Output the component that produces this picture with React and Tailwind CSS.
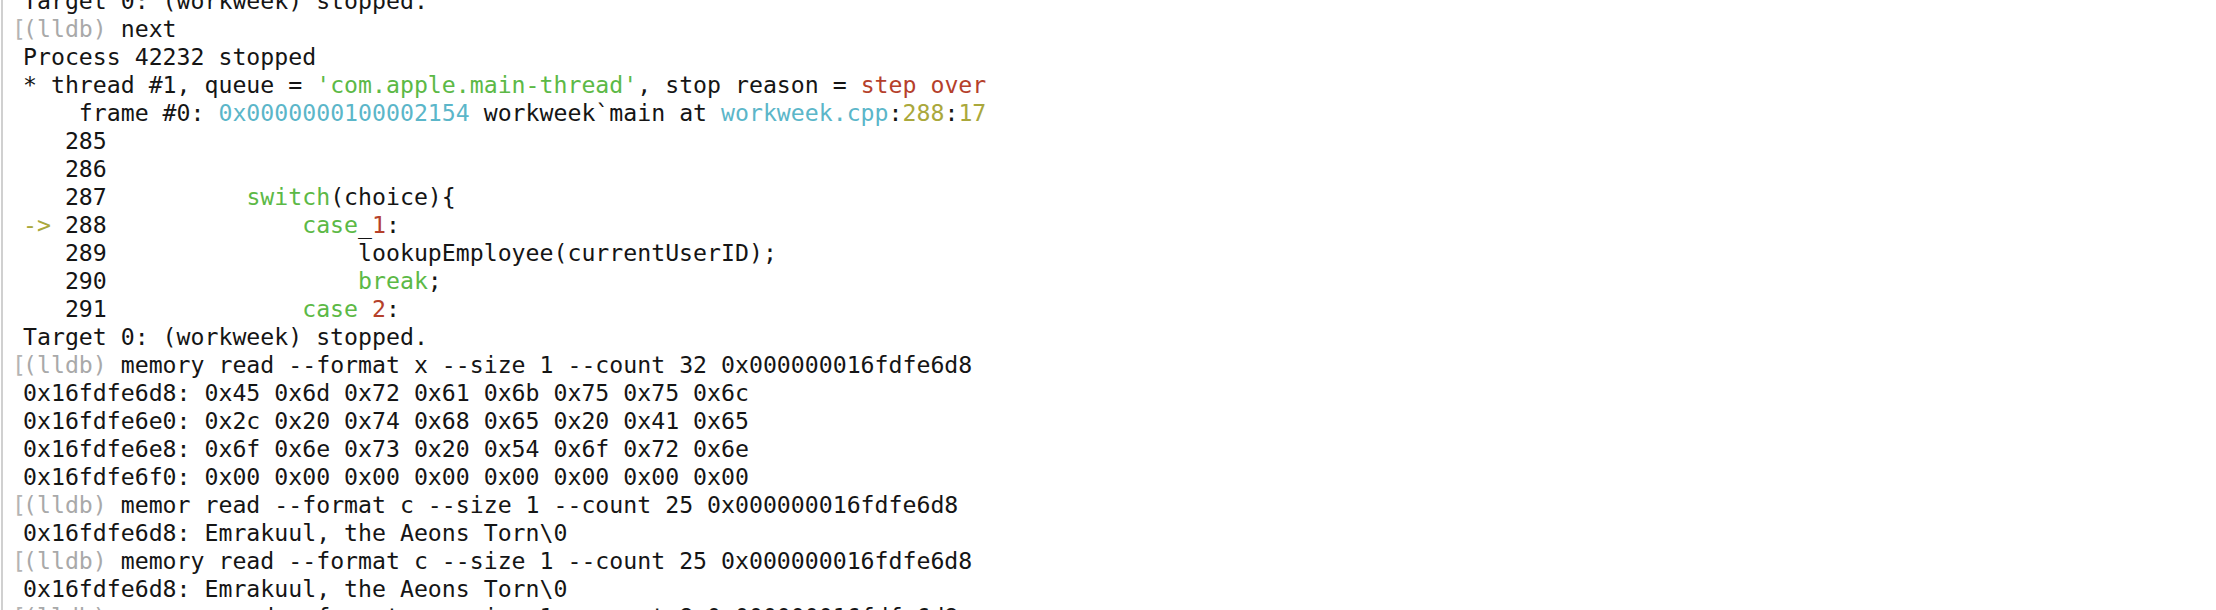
const G = "text-[#5cb946]";
const C = "text-[#5bb6c9]";
const R = "text-[#b5402b]";
const Y = "text-[#aaa83c]";
const P = "text-[#a9a9a9]";

// each line: [marker, segments]; segment = text or [className, text]
const LINES = [
  [false, ["Target 0: (workweek) stopped."]],
  [true, [[P, "(lldb)"], " next"]],
  [false, ["Process 42232 stopped"]],
  [
    false,
    [
      "* thread #1, queue = ",
      [G, "'com.apple.main-thread'"],
      ", stop reason = ",
      [R, "step over"],
    ],
  ],
  [
    false,
    [
      "    frame #0: ",
      [C, "0x0000000100002154"],
      " workweek`main at ",
      [C, "workweek.cpp"],
      ":",
      [Y, "288"],
      ":",
      [Y, "17"],
    ],
  ],
  [false, ["   285"]],
  [false, ["   286"]],
  [false, ["   287          ", [G, "switch"], "(choice){"]],
  [false, [[Y, "->"], " 288              ", [G, "case"], "_", [R, "1"], ":"]],
  [false, ["   289                  lookupEmployee(currentUserID);"]],
  [false, ["   290                  ", [G, "break"], ";"]],
  [false, ["   291              ", [G, "case"], " ", [R, "2"], ":"]],
  [false, ["Target 0: (workweek) stopped."]],
  [
    true,
    [
      [P, "(lldb)"],
      " memory read --format x --size 1 --count 32 0x000000016fdfe6d8",
    ],
  ],
  [false, ["0x16fdfe6d8: 0x45 0x6d 0x72 0x61 0x6b 0x75 0x75 0x6c"]],
  [false, ["0x16fdfe6e0: 0x2c 0x20 0x74 0x68 0x65 0x20 0x41 0x65"]],
  [false, ["0x16fdfe6e8: 0x6f 0x6e 0x73 0x20 0x54 0x6f 0x72 0x6e"]],
  [false, ["0x16fdfe6f0: 0x00 0x00 0x00 0x00 0x00 0x00 0x00 0x00"]],
  [
    true,
    [
      [P, "(lldb)"],
      " memor read --format c --size 1 --count 25 0x000000016fdfe6d8",
    ],
  ],
  [false, ["0x16fdfe6d8: Emrakuul, the Aeons Torn\\0"]],
  [
    true,
    [
      [P, "(lldb)"],
      " memory read --format c --size 1 --count 25 0x000000016fdfe6d8",
    ],
  ],
  [false, ["0x16fdfe6d8: Emrakuul, the Aeons Torn\\0"]],
  [
    true,
    [
      [P, "(lldb)"],
      " memory read --format c --size 1 --count 8 0x000000016fdfe6d8",
    ],
  ],
];

function Line({ mark, segs }) {
  return (
    <div className="flex h-[28px] leading-[28px]">
      <span className="w-[20px] shrink-0 pl-[9px] text-[#b4b4b4]">
        {mark ? "[" : ""}
      </span>
      <span className="whitespace-pre">
        {segs.map((s, i) =>
          typeof s === "string" ? (
            <span key={i}>{s}</span>
          ) : (
            <span key={i} className={s[0]}>
              {s[1]}
            </span>
          )
        )}
      </span>
    </div>
  );
}

export default function App() {
  return (
    <div className="flex h-[610px] w-full overflow-hidden bg-white">
      <div className="ml-px w-[2px] shrink-0 bg-[#d0d0d0]" />
      <div
        className="mt-[-13px] flex-1 text-[23.2px] text-[#151515]"
        style={{ fontFamily: '"DejaVu Sans Mono", "Liberation Mono", monospace' }}
      >
        {LINES.map(([mark, segs], i) => (
          <Line key={i} mark={mark} segs={segs} />
        ))}
      </div>
    </div>
  );
}
